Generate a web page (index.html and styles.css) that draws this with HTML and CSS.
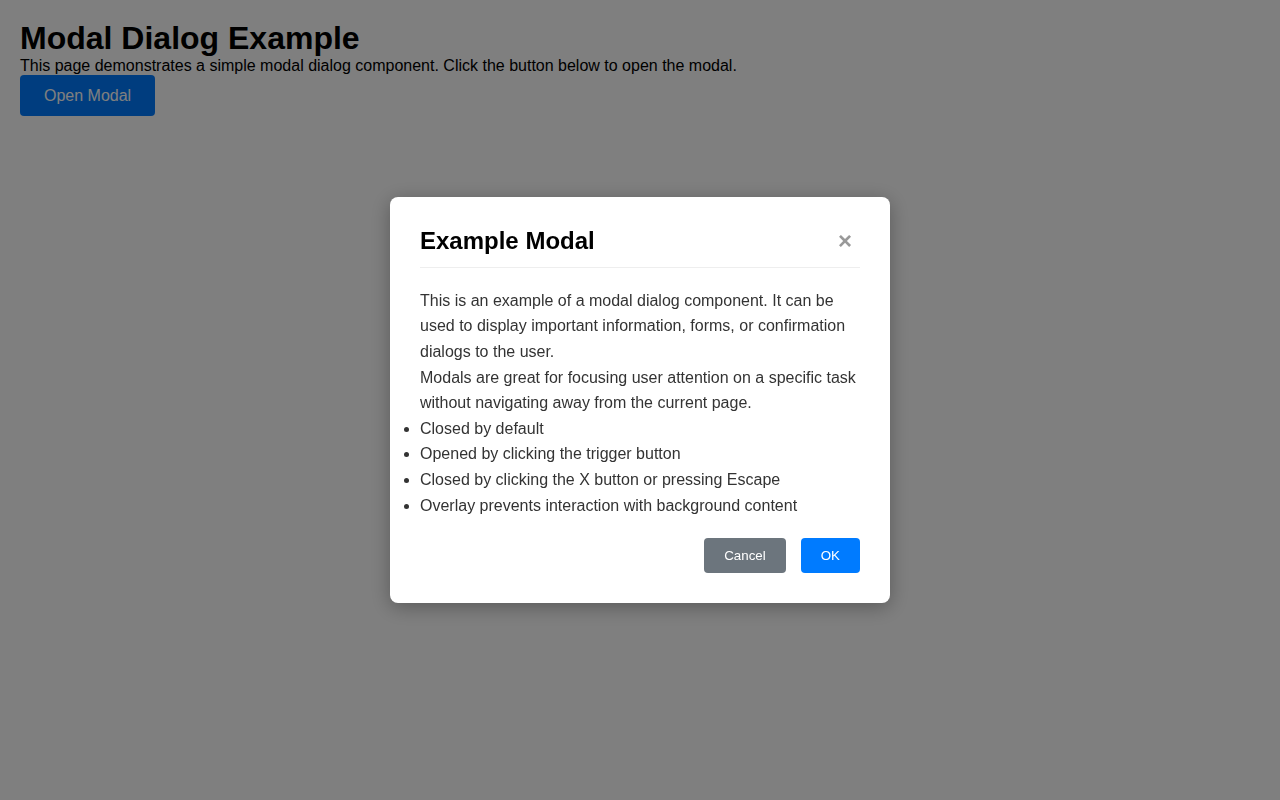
FILE: index.html
```html
<!doctype html>
<html>
<head>
<meta charset="utf-8">
<title>Modal Dialog Example</title>
<link rel="stylesheet" href="styles.css">
</head>
<body>
<h1 class="page-title">Modal Dialog Example</h1>
<p class="page-text">This page demonstrates a simple modal dialog component. Click the button below to open the modal.</p>
<button class="open-btn" type="button">Open Modal</button>

<div class="overlay">
  <div class="modal">
    <div class="modal-header">
      <h2 class="modal-title">Example Modal</h2>
      <button class="close-btn" type="button">&times;</button>
    </div>
    <div class="modal-body">
      <p>This is an example of a modal dialog component. It can be used to display important information, forms, or confirmation dialogs to the user.</p>
      <p>Modals are great for focusing user attention on a specific task without navigating away from the current page.</p>
      <ul>
        <li>Closed by default</li>
        <li>Opened by clicking the trigger button</li>
        <li>Closed by clicking the X button or pressing Escape</li>
        <li>Overlay prevents interaction with background content</li>
      </ul>
    </div>
    <div class="modal-footer">
      <button class="btn btn-cancel" type="button">Cancel</button>
      <button class="btn btn-ok" type="button">OK</button>
    </div>
  </div>
</div>
</body>
</html>
```

FILE: styles.css
```css
body{
        margin:0;
        padding:20px;
        font-family:"Liberation Sans", Arial, sans-serif;
        background:#fff;
        color:#000;
}
.page-title{
        margin:0;
        font-size:32px;
        line-height:37px;
}
.page-text{
        margin:0;
        font-size:16px;
        line-height:18px;
}
.open-btn{
        display:block;
        padding:12px 24px;
        border:none;
        border-radius:4px;
        background:#007bff;
        color:#fff;
        font-family:inherit;
        font-size:16px;
        line-height:17px;
}
.overlay{
        position:fixed;
        top:0;
        left:0;
        right:0;
        bottom:0;
        background:rgba(0,0,0,0.5);
        display:flex;
        align-items:center;
        justify-content:center;
}
.modal{
        width:500px;
        box-sizing:border-box;
        padding:30px;
        background:#fff;
        border-radius:8px;
        box-shadow:0 4px 20px rgba(0,0,0,0.3);
        color:#333;
}
.modal-header{
        display:flex;
        align-items:center;
        justify-content:space-between;
        padding-bottom:12px;
        border-bottom:1px solid #eee;
}
.modal-title{
        margin:0;
        font-size:24px;
        line-height:28px;
        color:#000;
}
.close-btn{
        border:none;
        background:none;
        padding:0 8px 0 0;
        font-family:inherit;
        font-size:24px;
        font-weight:bold;
        line-height:28px;
        color:#999;
}
.modal-body{
        margin-top:20px;
        font-size:16px;
        line-height:1.6;
}
.modal-body p{
        margin:0;
}
.modal-body ul{
        margin:0;
        padding:0;
}
.modal-footer{
        display:flex;
        justify-content:flex-end;
        gap:15px;
        margin-top:20px;
}
.btn{
        border:none;
        border-radius:4px;
        padding:10px 20px;
        font-family:inherit;
        font-size:13.333px;
        line-height:15px;
        color:#fff;
}
.btn-cancel{
        background:#6c757d;
}
.btn-ok{
        background:#007bff;
}
```
